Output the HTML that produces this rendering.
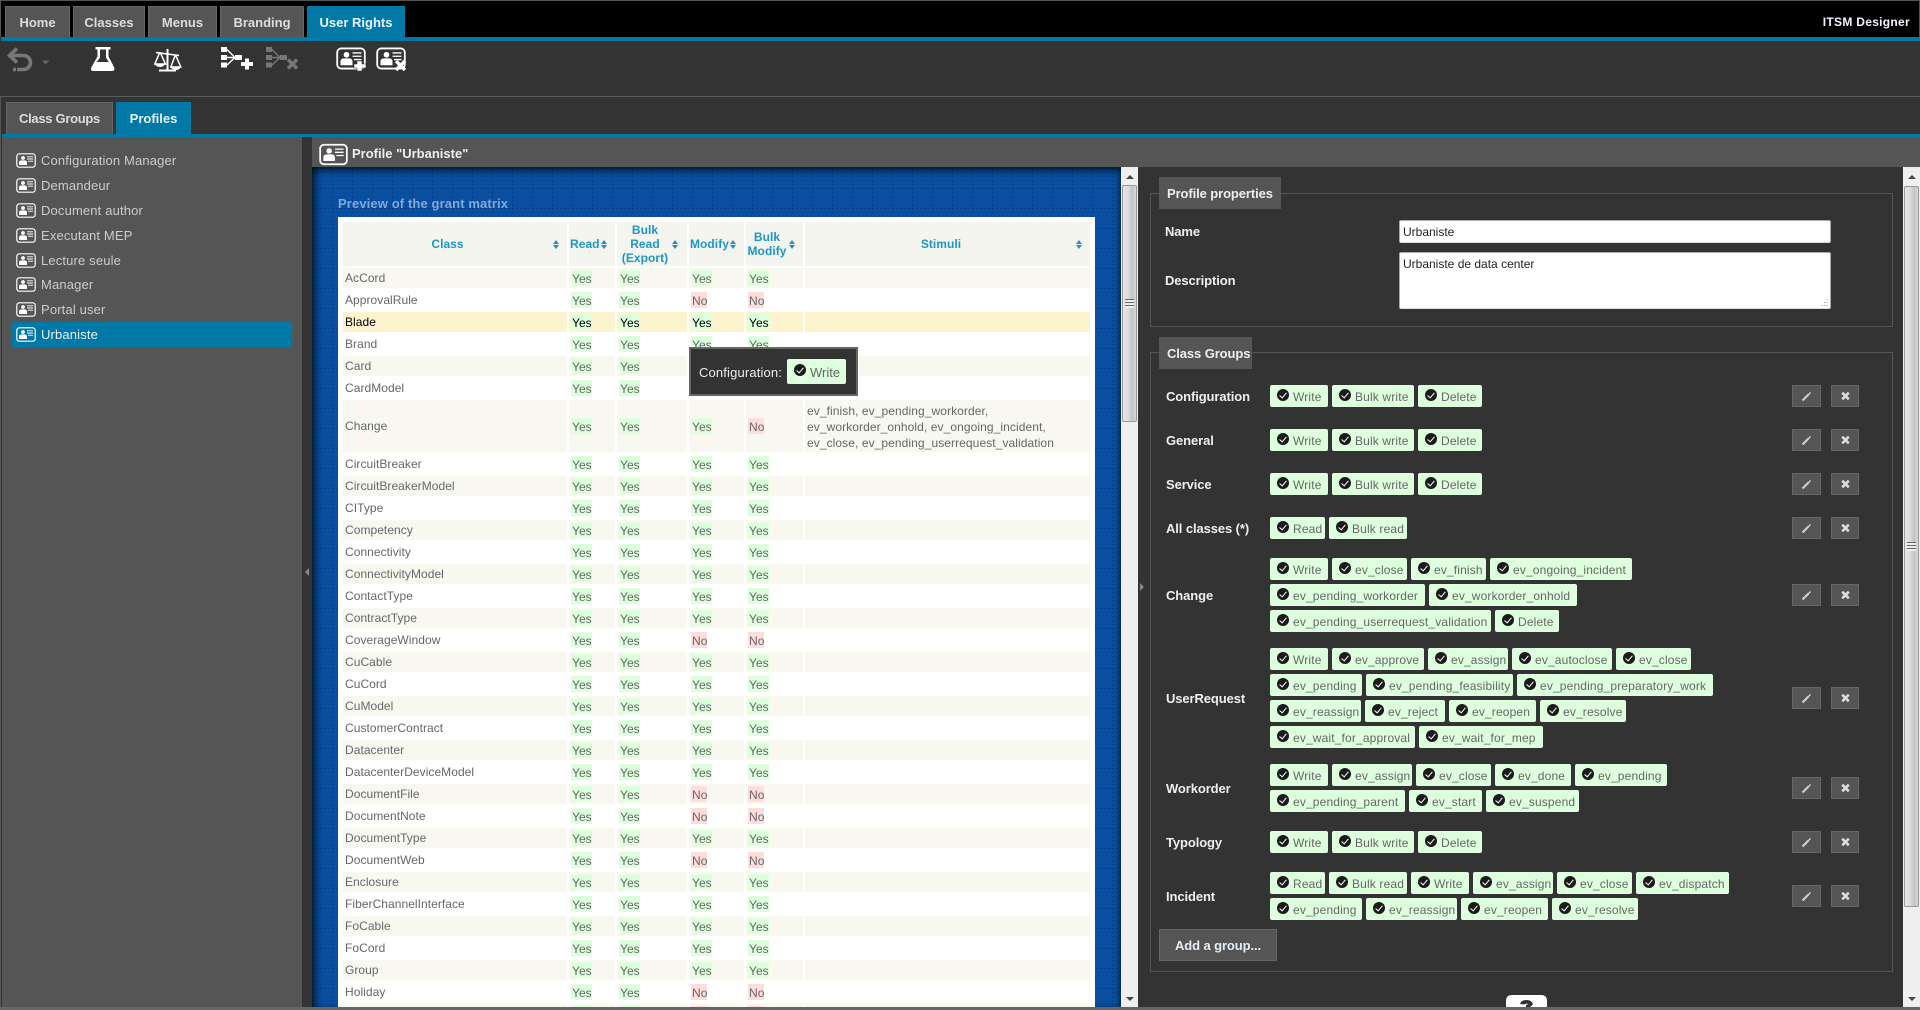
<!DOCTYPE html>
<html><head><meta charset="utf-8"><title>ITSM Designer</title>
<style>
html,body{margin:0;padding:0;background:#333;width:1920px;height:1010px;overflow:hidden;font-family:"Liberation Sans",Arial,sans-serif;font-size:12px}
div,span,b,i,svg,table{box-sizing:border-box}
.a{position:absolute}
#root{position:relative;width:1920px;height:1010px;overflow:hidden;background:#333}
.tab{position:absolute;top:6px;height:31px;background:#555;border:1px solid #666;border-bottom:0;color:#ddd;font:bold 13px/31px "Liberation Sans",sans-serif;text-align:center}
.tab.on{background:#0079a6;border-color:#0079a6;color:#e8f4f8}
.t2{top:102px;height:32px;line-height:31px}
.li{position:absolute;left:12px;width:280px;height:25px;color:#ccc;font-size:13px;line-height:25px;padding-left:29px;letter-spacing:.15px}
.li svg{position:absolute;left:4px;top:5px;width:20px;height:15px}
.sel{background:#0079a6;color:#eee}
#tw{position:absolute;left:338px;top:217px;width:757px;height:790px;background:#fff;overflow:hidden}
table{position:absolute;left:3px;top:3px;border-collapse:separate;border-spacing:2px;table-layout:fixed;width:751px;color:#666;font-size:12px;letter-spacing:.05px}
td,th{padding:0 2px;height:20px;line-height:17px;white-space:nowrap;overflow:hidden}
th{height:44px;background:#f5f5ef;color:#1c96c8;font-weight:bold;text-align:center;line-height:14px;position:relative;white-space:normal;overflow:visible}
tr.o td{background:#f8f8f1}
tr.h td{background:#fdf3cf;color:#000}
td u,td s{display:inline-block;text-decoration:none;height:16px;line-height:18px;padding:0 0 0 1px;min-width:20px;vertical-align:middle}
td s{min-width:15px}
td u{background:#dfd}
td s{background:#fdd}
.so{position:absolute;width:7px;height:9px;top:18px}
.so:before,.so:after{content:"";position:absolute;left:0;border-left:3.5px solid transparent;border-right:3.5px solid transparent}
.so:before{top:0;border-bottom:4px solid #2a8fc0}
.so:after{bottom:0;border-top:4px solid #2a8fc0}
.lg{position:absolute;background:#555;color:#eee;font:bold 13px/33px "Liberation Sans",sans-serif;height:32px;left:1159px;padding-left:8px;letter-spacing:-.1px}
.fs{position:absolute;left:1150px;width:743px;border:1px solid #555}
.lb{position:absolute;left:1166px;margin-top:1px;color:#eee;font:bold 13px/16px "Liberation Sans",sans-serif;letter-spacing:-.1px}
.r{position:absolute;left:1270px;height:22px}
.r b{position:absolute;top:0;height:22px;background:#dfd;border-radius:2px;color:#666;font:normal 12px/24px "Liberation Sans",sans-serif;padding-left:23px;white-space:nowrap;overflow:hidden;letter-spacing:.15px}
.r b i,#tip i{position:absolute;left:7px;top:4px;width:12px;height:12px;border-radius:50%;background:#1a1a1a}
.r b i:after,#tip i:after{content:"";position:absolute;left:3.5px;top:2px;width:3px;height:6px;border:solid #fff;border-width:0 1.5px 1.5px 0;transform:rotate(40deg)}
.bt{position:absolute;width:29px;height:22px;background:#555;border:1px solid #666}
.bt+.bt{margin-left:1px;width:28px}
.bt svg{position:absolute;left:0;top:0;width:27px;height:20px}
.sb{position:absolute;background:#efefef}
.th{position:absolute;border:1px solid #999;border-radius:2px;background:linear-gradient(90deg,#e6e6e6,#dcdcdc 40%,#c4c4c8 70%,#d8d8d8)}
.up,.dn{position:absolute;width:0;height:0;border-left:4px solid transparent;border-right:4px solid transparent}
.up{border-bottom:4px solid #444}
.dn{border-top:4px solid #444}
.gr{position:absolute;width:9px;height:9px;background:repeating-linear-gradient(180deg,#666 0 1px,#eee 1px 3px)}
</style></head><body><div id="root">
<svg width="0" height="0" style="position:absolute"><defs>
<symbol id="p" viewBox="0 0 20 15"><rect x=".8" y=".8" width="18.4" height="13.4" rx="2.6" fill="none" stroke="#fff" stroke-width="1.2"/><circle cx="7" cy="5" r="1.9" fill="#fff"/><path d="M3 12V9.5Q3 7.6 5.2 7.4H8.8Q11 7.6 11 9.5V12Z" fill="#fff"/><path d="M11 3.8H17M11 6H17M12 8.2H17" stroke="#fff" stroke-width=".9"/></symbol>
<symbol id="ed" viewBox="0 0 27 20"><path d="M9.500 14.500L15.500 8.500" stroke="#ccc" stroke-width="2.200"/><path d="M15.500 8.500L17.500 6.500" stroke="#eee" stroke-width="1.200"/></symbol>
<symbol id="xx" viewBox="0 0 27 20"><path d="M10.200 6.700L16.800 13.300M16.800 6.700L10.200 13.300" stroke="#ddd" stroke-width="2.600"/></symbol>
<pattern id="gd" width="20" height="20" patternUnits="userSpaceOnUse" x="0" y="1"><path d="M.5 0V20" stroke="#04306e" stroke-opacity=".55" stroke-dasharray="2 2"/><path d="M0 .5H20" stroke="#04306e" stroke-opacity=".55" stroke-dasharray="2 2"/><path d="M0 4.500H20M0 8.500H20M0 12.500H20M0 16.500H20" stroke="#04306e" stroke-opacity=".1"/></pattern>
</defs></svg>

<!-- top bar -->
<div class="a" style="left:0;top:0;width:1920px;height:37px;background:#000;border-top:1px solid #555;border-left:1px solid #555;border-right:1px solid #555"></div>
<div class="tab" style="left:5px;width:65px">Home</div>
<div class="tab" style="left:73px;width:72px">Classes</div>
<div class="tab" style="left:148px;width:69px">Menus</div>
<div class="tab" style="left:220px;width:84px">Branding</div>
<div class="tab on" style="left:307px;width:98px">User Rights</div>
<div class="a" style="left:1780px;width:130px;top:15px;text-align:right;color:#f0f4ff;font:bold 12px/15px 'Liberation Sans',sans-serif;letter-spacing:.3px">ITSM Designer</div>
<div class="a" style="left:1px;top:37px;width:1919px;height:4px;background:#0079a6"></div>
<div class="a" style="left:0;top:96px;width:1920px;height:1px;background:#5c5c5c"></div>

<!-- toolbar icons -->
<svg class="a" style="left:0;top:0" width="420" height="96" viewBox="0 0 420 96">
<g fill="none" stroke="#777" stroke-width="3.6"><path d="M17 48.500L9.500 55.500L17 62.500"/><path d="M10 55.500H23.500A7 7 0 0 1 23.500 69.500H17"/></g><rect x="13" y="67.700" width="3" height="3.600" fill="#777"/>
<path d="M42 60.500H49.500L45.700 64.500Z" fill="#666"/>
<path d="M95.500 47H110.500V49.500H108.500V56.500L114 67Q115.500 71 112 71H93Q90 71 91.500 67L97.500 56.500V49.500H95.500Z" fill="#fff"/>
<path d="M100 49.500H106V57.500L108.800 62H96.800L100 57.500Z" fill="#333"/>
<g fill="none" stroke="#fff" stroke-width="1.500"><path d="M167.500 49V70M159 70.500H176" stroke-width="2"/><path d="M156 52.500L179 55.500"/><path d="M159.500 53L154.800 64H165.500L160.500 53Z"/><path d="M175 56L170.800 67H180.800L176 56Z"/></g>
<path d="M154.500 64H165.500Q163.500 67 160 67Q156.500 67 154.500 64ZM170.500 67H181Q179 70 175.700 70Q172.500 70 170.500 67Z" fill="#fff"/>
<rect x="221" y="47" width="6" height="5" fill="#fff"/><rect x="221" y="55" width="6" height="5" fill="#fff"/><rect x="221" y="62.500" width="6" height="5" fill="#fff"/><rect x="235" y="55" width="7" height="5" fill="#fff"/><path d="M227 49.500L235 57.500H227M235 57.500L227 65" stroke="#fff" stroke-width="1.400" fill="none"/>
<path d="M245 58.500H249V62H253V66H249V69.500H245V66H241V62H245Z" fill="#fff"/>
<g fill="#777"><rect x="266" y="47" width="6" height="5"/><rect x="266" y="55" width="6" height="5"/><rect x="266" y="62.500" width="6" height="5"/><rect x="280" y="55" width="7" height="5"/></g>
<path d="M272 49.500L280 57.500H272M280 57.500L272 65" stroke="#777" stroke-width="1.400" fill="none"/>
<path d="M288 59.500L297 68.500M297 59.500L288 68.500" stroke="#777" stroke-width="3.400"/>
<use href="#p" x="336" y="47" width="30" height="23"/>
<path d="M357 61H362V64H366V68H362V71H357V68H354V64H357Z" fill="#fff" stroke="#333" stroke-width=".6"/>
<use href="#p" x="376" y="47" width="30" height="23"/>
<path d="M396 61L405 70M405 61L396 70" stroke="#fff" stroke-width="3.400"/>
</svg>

<!-- second tabs -->
<div class="tab t2" style="left:6px;width:107px;letter-spacing:-.3px">Class Groups</div>
<div class="tab t2 on" style="left:116px;width:75px">Profiles</div>
<div class="a" style="left:2px;top:134px;width:1918px;height:3px;background:#0079a6"></div>

<!-- left panel -->
<div class="a" style="left:2px;top:137px;width:300px;height:870px;background:#555"></div>
<div class="a" style="left:0;top:97px;width:1px;height:913px;background:#555"></div>
<div class="li" style="top:148px"><svg><use href="#p"/></svg>Configuration Manager</div>
<div class="li" style="top:173px"><svg><use href="#p"/></svg>Demandeur</div>
<div class="li" style="top:198px"><svg><use href="#p"/></svg>Document author</div>
<div class="li" style="top:223px"><svg><use href="#p"/></svg>Executant MEP</div>
<div class="li" style="top:248px"><svg><use href="#p"/></svg>Lecture seule</div>
<div class="li" style="top:272px"><svg><use href="#p"/></svg>Manager</div>
<div class="li" style="top:297px"><svg><use href="#p"/></svg>Portal user</div>
<div class="li sel" style="top:322px"><svg><use href="#p"/></svg>Urbaniste</div>
<div class="a" style="left:305px;top:568px;width:0;height:0;border-top:4px solid transparent;border-bottom:4px solid transparent;border-right:4px solid #888"></div>

<!-- header -->
<div class="a" style="left:312px;top:137px;width:1608px;height:30px;background:#555"></div>
<svg class="a" style="left:319px;top:143px" width="29" height="23"><use href="#p" width="29" height="23"/></svg>
<div class="a" style="left:352px;top:146px;color:#eee;font:bold 13px/15px 'Liberation Sans',sans-serif">Profile "Urbaniste"</div>

<!-- blue -->
<div class="a" style="left:312px;top:167px;width:809px;height:840px;background:#0a50a2"></div>
<svg class="a" style="left:312px;top:167px" width="809" height="840"><rect width="809" height="840" fill="url(#gd)"/></svg>
<div class="a" style="left:312px;top:167px;width:809px;height:840px;box-shadow:inset 0 7px 8px -3px rgba(0,0,0,.6),inset 7px 0 8px -3px rgba(0,0,0,.6),inset -5px 0 6px -3px rgba(0,0,0,.45)"></div>
<div class="a" style="left:338px;top:196px;color:#7fa9da;font:bold 13px/15px 'Liberation Sans',sans-serif;letter-spacing:.12px">Preview of the grant matrix</div>

<div id="tw"><table>
<colgroup><col style="width:224px"><col style="width:46px"><col style="width:70px"><col style="width:55px"><col style="width:57px"><col style="width:285px"></colgroup>
<tr><th style="padding:0 15px 0 0">Class<span class="so" style="left:209.500px"></span></th><th style="text-align:left;padding-left:1px">Read<span class="so" style="left:31.500px"></span></th><th style="padding:0 14px 0 0">Bulk Read (Export)<span class="so" style="left:55px"></span></th><th style="text-align:left;padding-left:1px">Modify<span class="so" style="left:40.500px"></span></th><th style="padding:0 15px 0 0">Bulk Modify<span class="so" style="left:43px"></span></th><th style="padding:0 13px 0 0">Stimuli<span class="so" style="left:270.500px"></span></th></tr>
<tr class="o"><td>AcCord</td><td><u>Yes</u></td><td><u>Yes</u></td><td><u>Yes</u></td><td><u>Yes</u></td><td></td></tr>
<tr><td>ApprovalRule</td><td><u>Yes</u></td><td><u>Yes</u></td><td><s>No</s></td><td><s>No</s></td><td></td></tr>
<tr class="h"><td>Blade</td><td><u>Yes</u></td><td><u>Yes</u></td><td><u>Yes</u></td><td><u>Yes</u></td><td></td></tr>
<tr><td>Brand</td><td><u>Yes</u></td><td><u>Yes</u></td><td><u>Yes</u></td><td><u>Yes</u></td><td></td></tr>
<tr class="o"><td>Card</td><td><u>Yes</u></td><td><u>Yes</u></td><td><u>Yes</u></td><td><u>Yes</u></td><td></td></tr>
<tr><td>CardModel</td><td><u>Yes</u></td><td><u>Yes</u></td><td><u>Yes</u></td><td><u>Yes</u></td><td></td></tr>
<tr class="o"><td style="height:52px">Change</td><td><u>Yes</u></td><td><u>Yes</u></td><td><u>Yes</u></td><td><s>No</s></td><td style="line-height:16px;letter-spacing:.08px;padding-top:2px">ev_finish, ev_pending_workorder,<br>ev_workorder_onhold, ev_ongoing_incident,<br>ev_close, ev_pending_userrequest_validation</td></tr>
<tr><td>CircuitBreaker</td><td><u>Yes</u></td><td><u>Yes</u></td><td><u>Yes</u></td><td><u>Yes</u></td><td></td></tr>
<tr class="o"><td>CircuitBreakerModel</td><td><u>Yes</u></td><td><u>Yes</u></td><td><u>Yes</u></td><td><u>Yes</u></td><td></td></tr>
<tr><td>CIType</td><td><u>Yes</u></td><td><u>Yes</u></td><td><u>Yes</u></td><td><u>Yes</u></td><td></td></tr>
<tr class="o"><td>Competency</td><td><u>Yes</u></td><td><u>Yes</u></td><td><u>Yes</u></td><td><u>Yes</u></td><td></td></tr>
<tr><td>Connectivity</td><td><u>Yes</u></td><td><u>Yes</u></td><td><u>Yes</u></td><td><u>Yes</u></td><td></td></tr>
<tr class="o"><td>ConnectivityModel</td><td><u>Yes</u></td><td><u>Yes</u></td><td><u>Yes</u></td><td><u>Yes</u></td><td></td></tr>
<tr><td>ContactType</td><td><u>Yes</u></td><td><u>Yes</u></td><td><u>Yes</u></td><td><u>Yes</u></td><td></td></tr>
<tr class="o"><td>ContractType</td><td><u>Yes</u></td><td><u>Yes</u></td><td><u>Yes</u></td><td><u>Yes</u></td><td></td></tr>
<tr><td>CoverageWindow</td><td><u>Yes</u></td><td><u>Yes</u></td><td><s>No</s></td><td><s>No</s></td><td></td></tr>
<tr class="o"><td>CuCable</td><td><u>Yes</u></td><td><u>Yes</u></td><td><u>Yes</u></td><td><u>Yes</u></td><td></td></tr>
<tr><td>CuCord</td><td><u>Yes</u></td><td><u>Yes</u></td><td><u>Yes</u></td><td><u>Yes</u></td><td></td></tr>
<tr class="o"><td>CuModel</td><td><u>Yes</u></td><td><u>Yes</u></td><td><u>Yes</u></td><td><u>Yes</u></td><td></td></tr>
<tr><td>CustomerContract</td><td><u>Yes</u></td><td><u>Yes</u></td><td><u>Yes</u></td><td><u>Yes</u></td><td></td></tr>
<tr class="o"><td>Datacenter</td><td><u>Yes</u></td><td><u>Yes</u></td><td><u>Yes</u></td><td><u>Yes</u></td><td></td></tr>
<tr><td>DatacenterDeviceModel</td><td><u>Yes</u></td><td><u>Yes</u></td><td><u>Yes</u></td><td><u>Yes</u></td><td></td></tr>
<tr class="o"><td>DocumentFile</td><td><u>Yes</u></td><td><u>Yes</u></td><td><s>No</s></td><td><s>No</s></td><td></td></tr>
<tr><td>DocumentNote</td><td><u>Yes</u></td><td><u>Yes</u></td><td><s>No</s></td><td><s>No</s></td><td></td></tr>
<tr class="o"><td>DocumentType</td><td><u>Yes</u></td><td><u>Yes</u></td><td><u>Yes</u></td><td><u>Yes</u></td><td></td></tr>
<tr><td>DocumentWeb</td><td><u>Yes</u></td><td><u>Yes</u></td><td><s>No</s></td><td><s>No</s></td><td></td></tr>
<tr class="o"><td>Enclosure</td><td><u>Yes</u></td><td><u>Yes</u></td><td><u>Yes</u></td><td><u>Yes</u></td><td></td></tr>
<tr><td>FiberChannelInterface</td><td><u>Yes</u></td><td><u>Yes</u></td><td><u>Yes</u></td><td><u>Yes</u></td><td></td></tr>
<tr class="o"><td>FoCable</td><td><u>Yes</u></td><td><u>Yes</u></td><td><u>Yes</u></td><td><u>Yes</u></td><td></td></tr>
<tr><td>FoCord</td><td><u>Yes</u></td><td><u>Yes</u></td><td><u>Yes</u></td><td><u>Yes</u></td><td></td></tr>
<tr class="o"><td>Group</td><td><u>Yes</u></td><td><u>Yes</u></td><td><u>Yes</u></td><td><u>Yes</u></td><td></td></tr>
<tr><td>Holiday</td><td><u>Yes</u></td><td><u>Yes</u></td><td><s>No</s></td><td><s>No</s></td><td></td></tr>
<tr class="o"><td>Incident</td><td><u>Yes</u></td><td><u>Yes</u></td><td><s>No</s></td><td><s>No</s></td><td></td></tr>
</table></div>

<!-- tooltip -->
<div id="tip" class="a" style="left:689px;top:347px;width:169px;height:49px;background:#333;border:2px solid #666">
<div class="a" style="left:8px;top:16px;color:#eee;font-size:13px;line-height:16px;white-space:nowrap;letter-spacing:.15px">Configuration:</div>
<div class="a" style="left:96px;top:10px;width:59px;height:25px;background:#dfd;border-radius:2px;color:#666;font-size:13px;line-height:28px;padding-left:23px"><i style="left:7px;top:5px"></i>Write</div>
</div>

<!-- center scrollbar -->
<div class="sb" style="left:1121px;top:167px;width:17px;height:840px"></div>
<div class="up" style="left:1126px;top:175px"></div>
<div class="th" style="left:1122px;top:185px;width:15px;height:237px"></div>
<div class="gr" style="left:1125px;top:299px"></div>
<div class="dn" style="left:1126px;top:997px"></div>
<div class="a" style="left:1140px;top:583px;width:0;height:0;border-top:4px solid transparent;border-bottom:4px solid transparent;border-left:4px solid #888"></div>

<!-- right scrollbar -->
<div class="sb" style="left:1903px;top:167px;width:17px;height:840px"></div>
<div class="up" style="left:1908px;top:175px"></div>
<div class="th" style="left:1904px;top:186px;width:15px;height:721px"></div>
<div class="gr" style="left:1907px;top:542px"></div>
<div class="dn" style="left:1908px;top:997px"></div>

<!-- fieldset 1 -->
<div class="fs" style="top:193px;height:134px"></div>
<div class="lg" style="top:177px;width:122px">Profile properties</div>
<div class="lb" style="top:223px;left:1165px">Name</div>
<div class="a" style="left:1399px;top:220px;width:432px;height:23px;background:#fff;border:1px solid #aaa;border-bottom-color:#ddd;border-radius:2px;color:#222;font-size:12px;line-height:22px;padding-left:3px">Urbaniste</div>
<div class="lb" style="top:272px;left:1165px">Description</div>
<div class="a" style="left:1399px;top:252px;width:432px;height:57px;background:#fff;border:1px solid #aaa;border-bottom-color:#ddd;border-radius:2px;color:#222;font-size:12px;line-height:14px;padding:4px 0 0 3px">Urbaniste de data center</div>
<svg class="a" style="left:1820px;top:298px" width="9" height="9"><path d="M7 1v1M4.500 4v1M7 4v1M2 7v1M4.500 7v1M7 7v1" stroke="#999"/></svg>

<!-- fieldset 2 -->
<div class="fs" style="top:352px;height:620px"></div>
<div class="lg" style="top:337px;width:93px">Class Groups</div>

<div class="lb" style="top:388px">Configuration</div>
<div class="r" style="top:385px"><b style="left:0;width:58px"><i></i>Write</b><b style="left:62px;width:82px"><i></i>Bulk write</b><b style="left:148px;width:64px"><i></i>Delete</b></div>
<div class="bt" style="left:1792px;top:385px"><svg><use href="#ed"/></svg></div><div class="bt" style="left:1830px;top:385px"><svg><use href="#xx"/></svg></div>

<div class="lb" style="top:432px">General</div>
<div class="r" style="top:429px"><b style="left:0;width:58px"><i></i>Write</b><b style="left:62px;width:82px"><i></i>Bulk write</b><b style="left:148px;width:64px"><i></i>Delete</b></div>
<div class="bt" style="left:1792px;top:429px"><svg><use href="#ed"/></svg></div><div class="bt" style="left:1830px;top:429px"><svg><use href="#xx"/></svg></div>

<div class="lb" style="top:476px">Service</div>
<div class="r" style="top:473px"><b style="left:0;width:58px"><i></i>Write</b><b style="left:62px;width:82px"><i></i>Bulk write</b><b style="left:148px;width:64px"><i></i>Delete</b></div>
<div class="bt" style="left:1792px;top:473px"><svg><use href="#ed"/></svg></div><div class="bt" style="left:1830px;top:473px"><svg><use href="#xx"/></svg></div>

<div class="lb" style="top:520px">All classes (*)</div>
<div class="r" style="top:517px"><b style="left:0;width:55px"><i></i>Read</b><b style="left:59px;width:78px"><i></i>Bulk read</b></div>
<div class="bt" style="left:1792px;top:517px"><svg><use href="#ed"/></svg></div><div class="bt" style="left:1830px;top:517px"><svg><use href="#xx"/></svg></div>

<div class="lb" style="top:587px">Change</div>
<div class="r" style="top:558px"><b style="left:0;width:58px"><i></i>Write</b><b style="left:62px;width:75px"><i></i>ev_close</b><b style="left:141px;width:75px"><i></i>ev_finish</b><b style="left:220px;width:142px"><i></i>ev_ongoing_incident</b></div>
<div class="r" style="top:584px"><b style="left:0;width:155px"><i></i>ev_pending_workorder</b><b style="left:159px;width:148px"><i></i>ev_workorder_onhold</b></div>
<div class="r" style="top:610px"><b style="left:0;width:221px"><i></i>ev_pending_userrequest_validation</b><b style="left:225px;width:64px"><i></i>Delete</b></div>
<div class="bt" style="left:1792px;top:584px"><svg><use href="#ed"/></svg></div><div class="bt" style="left:1830px;top:584px"><svg><use href="#xx"/></svg></div>

<div class="lb" style="top:690px">UserRequest</div>
<div class="r" style="top:648px"><b style="left:0;width:58px"><i></i>Write</b><b style="left:62px;width:92px"><i></i>ev_approve</b><b style="left:158px;width:80px"><i></i>ev_assign</b><b style="left:242px;width:100px"><i></i>ev_autoclose</b><b style="left:346px;width:75px"><i></i>ev_close</b></div>
<div class="r" style="top:674px"><b style="left:0;width:92px"><i></i>ev_pending</b><b style="left:96px;width:147px"><i></i>ev_pending_feasibility</b><b style="left:247px;width:196px"><i></i>ev_pending_preparatory_work</b></div>
<div class="r" style="top:700px"><b style="left:0;width:91px"><i></i>ev_reassign</b><b style="left:95px;width:80px"><i></i>ev_reject</b><b style="left:179px;width:87px"><i></i>ev_reopen</b><b style="left:270px;width:86px"><i></i>ev_resolve</b></div>
<div class="r" style="top:726px"><b style="left:0;width:145px"><i></i>ev_wait_for_approval</b><b style="left:149px;width:124px"><i></i>ev_wait_for_mep</b></div>
<div class="bt" style="left:1792px;top:687px"><svg><use href="#ed"/></svg></div><div class="bt" style="left:1830px;top:687px"><svg><use href="#xx"/></svg></div>

<div class="lb" style="top:780px">Workorder</div>
<div class="r" style="top:764px"><b style="left:0;width:58px"><i></i>Write</b><b style="left:62px;width:80px"><i></i>ev_assign</b><b style="left:146px;width:75px"><i></i>ev_close</b><b style="left:225px;width:76px"><i></i>ev_done</b><b style="left:305px;width:92px"><i></i>ev_pending</b></div>
<div class="r" style="top:790px"><b style="left:0;width:135px"><i></i>ev_pending_parent</b><b style="left:139px;width:73px"><i></i>ev_start</b><b style="left:216px;width:93px"><i></i>ev_suspend</b></div>
<div class="bt" style="left:1792px;top:777px"><svg><use href="#ed"/></svg></div><div class="bt" style="left:1830px;top:777px"><svg><use href="#xx"/></svg></div>

<div class="lb" style="top:834px">Typology</div>
<div class="r" style="top:831px"><b style="left:0;width:58px"><i></i>Write</b><b style="left:62px;width:82px"><i></i>Bulk write</b><b style="left:148px;width:64px"><i></i>Delete</b></div>
<div class="bt" style="left:1792px;top:831px"><svg><use href="#ed"/></svg></div><div class="bt" style="left:1830px;top:831px"><svg><use href="#xx"/></svg></div>

<div class="lb" style="top:888px">Incident</div>
<div class="r" style="top:872px"><b style="left:0;width:55px"><i></i>Read</b><b style="left:59px;width:78px"><i></i>Bulk read</b><b style="left:141px;width:58px"><i></i>Write</b><b style="left:203px;width:80px"><i></i>ev_assign</b><b style="left:287px;width:75px"><i></i>ev_close</b><b style="left:366px;width:93px"><i></i>ev_dispatch</b></div>
<div class="r" style="top:898px"><b style="left:0;width:92px"><i></i>ev_pending</b><b style="left:96px;width:91px"><i></i>ev_reassign</b><b style="left:191px;width:87px"><i></i>ev_reopen</b><b style="left:282px;width:86px"><i></i>ev_resolve</b></div>
<div class="bt" style="left:1792px;top:885px"><svg><use href="#ed"/></svg></div><div class="bt" style="left:1830px;top:885px"><svg><use href="#xx"/></svg></div>

<div class="a" style="left:1159px;top:929px;width:118px;height:32px;background:#555;border:1px solid #666;color:#e8eef8;font:bold 13px/31px 'Liberation Sans',sans-serif;text-align:center;letter-spacing:-.1px">Add a group...</div>

<svg class="a" style="left:1506px;top:995px" width="41" height="12"><path d="M0 12V6Q0 0 6 0H35Q41 0 41 6V12Z" fill="#fff"/><path d="M14 9Q15 5 20.500 5Q26 5 27 9.500L24 12H20V10L22.500 9Q20.500 8 18 9.500Z" fill="#333"/></svg>

<div class="a" style="left:0;top:1007px;width:1920px;height:3px;background:#666"></div>
</div></body></html>
